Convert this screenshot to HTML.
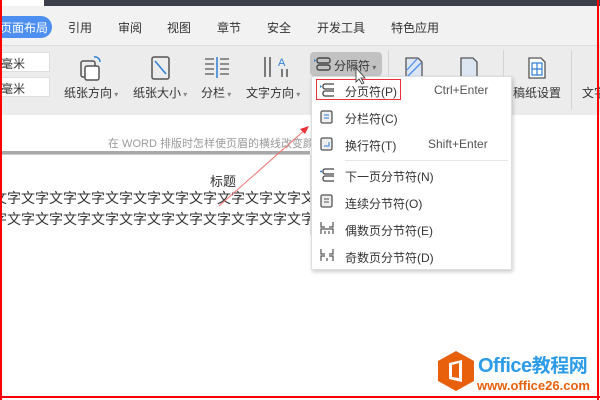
<!DOCTYPE html>
<html><head><meta charset="utf-8"><style>
*{margin:0;padding:0;box-sizing:border-box}
body{width:600px;height:400px;overflow:hidden;position:relative;background:#fff;font-family:"Liberation Sans","Noto Sans CJK SC",sans-serif;color:#333}
.a{position:absolute;white-space:nowrap}
.tab{font-size:12px;top:19px}
.lbl{font-size:12px;top:84px}
.mi{font-size:12px;left:345px}
.mic{position:absolute;left:320px;width:14px;height:14px}
</style></head><body>
<div class="a" style="left:44px;top:0;width:556px;height:6px;background:#3c3f4a"></div>
<div class="a" style="left:0;top:6px;width:600px;height:40px;background:#f2f2f2"></div>
<div class="a" style="left:0;top:16px;width:52px;height:22px;background:#4d8ff0;border-radius:0 11px 11px 0"></div>
<div class="a tab" style="left:0;color:#fff">页面布局</div>
<div class="a tab" style="left:68px">引用</div>
<div class="a tab" style="left:118px">审阅</div>
<div class="a tab" style="left:167px">视图</div>
<div class="a tab" style="left:217px">章节</div>
<div class="a tab" style="left:267px">安全</div>
<div class="a tab" style="left:317px">开发工具</div>
<div class="a tab" style="left:391px">特色应用</div>
<div class="a" style="left:0;top:45px;width:600px;height:70px;background:#ececec;border-top:1px solid #ddd"></div>
<div class="a" style="left:0;top:52px;width:50px;height:20px;background:#fff;border:1px solid #ddd;font-size:12px;padding:2px 0 0 0">毫米</div>
<div class="a" style="left:0;top:77px;width:50px;height:20px;background:#fff;border:1px solid #ddd;font-size:12px;padding:2px 0 0 0">毫米</div>
<svg class="a" style="left:78px;top:55px" width="26" height="26"><rect x="3" y="6" width="14" height="16" fill="none" stroke="#555" stroke-width="1.5" rx="2"/><rect x="7" y="11" width="14" height="14" fill="#fff" stroke="#555" stroke-width="1.5" rx="2"/><path d="M16 2 a5 5 0 0 1 6 5" fill="none" stroke="#2d7fd6" stroke-width="1.5"/></svg>
<svg class="a" style="left:150px;top:55px" width="22" height="26"><rect x="2" y="2" width="17" height="22" fill="none" stroke="#555" stroke-width="1.5" rx="2"/><path d="M5 6 L16 19" stroke="#2d7fd6" stroke-width="1.5"/></svg>
<svg class="a" style="left:204px;top:56px" width="26" height="22"><path d="M1 3h9M1 8h9M1 13h9M1 18h9M16 3h9M16 8h9M16 13h9M16 18h9" stroke="#555" stroke-width="1.3"/><path d="M13 1v21" stroke="#2d7fd6" stroke-width="1.5"/></svg>
<svg class="a" style="left:262px;top:55px" width="28" height="24"><path d="M3 2v20M8 2v20M20 14v8M25 14v8" stroke="#555" stroke-width="1.5"/><text x="16" y="11" font-size="11" fill="#2d7fd6" font-family="Liberation Sans">A</text></svg>
<div class="a lbl" style="left:64px">纸张方向<span style="font-size:8px;color:#888"> ▾</span></div>
<div class="a lbl" style="left:133px">纸张大小<span style="font-size:8px;color:#888"> ▾</span></div>
<div class="a lbl" style="left:201px">分栏<span style="font-size:8px;color:#888"> ▾</span></div>
<div class="a lbl" style="left:246px">文字方向<span style="font-size:8px;color:#888"> ▾</span></div>
<div class="a" style="left:310px;top:52px;width:72px;height:24px;background:#c2c2c2;border-radius:4px"></div>
<svg class="a" style="left:314px;top:57px" width="18" height="14"><rect x="3" y="1" width="13" height="5" rx="2" fill="none" stroke="#444" stroke-width="1.4"/><rect x="3" y="8" width="13" height="5" rx="2" fill="none" stroke="#444" stroke-width="1.4"/><path d="M0 2l2 1.5-2 1.5z" fill="#2d7fd6"/></svg>
<div class="a" style="left:334px;top:57px;font-size:12px">分隔符<span style="font-size:8px;color:#666"> ▾</span></div>
<div class="a" style="left:388px;top:50px;width:1px;height:60px;background:#d4d4d4"></div>
<div class="a" style="left:503px;top:50px;width:1px;height:60px;background:#d4d4d4"></div>
<div class="a" style="left:571px;top:50px;width:1px;height:60px;background:#d4d4d4"></div>
<svg class="a" style="left:404px;top:56px" width="20" height="24"><path d="M2 2h12l4 4v16H2z" fill="#dce6f2" stroke="#555" stroke-width="1.3"/><path d="M3 14L13 3M3 21L17 7" stroke="#4d8ff0" stroke-width="1.3"/></svg>
<svg class="a" style="left:459px;top:56px" width="20" height="24"><path d="M2 2h12l4 4v16H2z" fill="#dce6f2" stroke="#555" stroke-width="1.3"/></svg>
<svg class="a" style="left:527px;top:56px" width="20" height="24"><path d="M2 2h12l4 4v16H2z" fill="#fff" stroke="#555" stroke-width="1.3"/><path d="M5 7h10v12H5zM5 13h10M10 7v12" stroke="#2d7fd6" fill="none" stroke-width="1.2"/></svg>
<div class="a lbl" style="left:513px">稿纸设置</div>
<div class="a lbl" style="left:582px">文字</div>
<div class="a" style="left:108px;top:135px;font-size:11px;color:#999">在 WORD 排版时怎样使页眉的横线改变颜色</div>
<div class="a" style="left:0;top:151px;width:310px;height:4px;background:#a8a8a8;border-bottom:1px solid #ccc"></div>
<div class="a" style="left:310px;top:155px;width:2px;height:80px;background:#e4e4e4"></div>
<div class="a" style="left:210px;top:171px;font-size:13px;color:#333">标题</div>
<div class="a" style="left:0;top:186px;width:310px;height:45px;overflow:hidden">
<div class="a" style="left:-7px;top:2px;font-size:14px;color:#333">文字文字文字文字文字文字文字文字文字文字文字文字</div>
<div class="a" style="left:-21px;top:23px;font-size:14px;color:#333">文字文字文字文字文字文字文字文字文字文字文字文字</div>
</div>
<div class="a" style="left:311px;top:76px;width:201px;height:194px;background:#fff;border:1px solid #ddd;box-shadow:1px 2px 4px rgba(0,0,0,.2)"></div>
<div class="a" style="left:316px;top:79px;width:85px;height:21px;border:1.5px solid #e8333a"></div>
<svg class="mic" style="top:83px" width="16" height="14"><rect x="3" y="1" width="12" height="5" rx="2" fill="none" stroke="#444" stroke-width="1.3"/><rect x="3" y="8" width="12" height="5" rx="2" fill="none" stroke="#444" stroke-width="1.3"/><path d="M0 2l2 1.5-2 1.5z" fill="#2d7fd6"/></svg>
<div class="a mi" style="top:83px">分页符(P)</div><div class="a mi" style="left:434px;top:83px;color:#555">Ctrl+Enter</div>
<svg class="mic" style="top:110px"><rect x="1" y="1" width="11" height="12" rx="1.5" fill="#eee" stroke="#555" stroke-width="1.3"/><path d="M4 5h5M4 8h5" stroke="#2d7fd6"/></svg>
<div class="a mi" style="top:110px">分栏符(C)</div>
<svg class="mic" style="top:137px"><rect x="1" y="1" width="11" height="12" rx="1.5" fill="#eee" stroke="#555" stroke-width="1.3"/><path d="M9 5v4H4" stroke="#2d7fd6" fill="none"/></svg>
<div class="a mi" style="top:137px">换行符(T)</div><div class="a mi" style="left:428px;top:137px;color:#555">Shift+Enter</div>
<div class="a" style="left:345px;top:160px;width:163px;height:1px;background:#e6e6e6"></div>
<svg class="mic" style="top:168px" width="16" height="14"><rect x="3" y="1" width="12" height="5" rx="2" fill="none" stroke="#444" stroke-width="1.3"/><rect x="3" y="8" width="12" height="5" rx="2" fill="none" stroke="#444" stroke-width="1.3"/><circle cx="1" cy="3.5" r="1" fill="#2d7fd6"/></svg>
<div class="a mi" style="top:168px">下一页分节符(N)</div>
<svg class="mic" style="top:194px"><rect x="1" y="1" width="11" height="12" rx="1.5" fill="#eee" stroke="#555" stroke-width="1.3"/><path d="M4 5h5M4 8h5" stroke="#555"/></svg>
<div class="a mi" style="top:195px">连续分节符(O)</div>
<svg class="mic" style="top:221px"><path d="M1 1v5h4M13 1v5H9M1 13V8h12v5M5 10v3M9 10v3" stroke="#555" fill="none" stroke-width="1.2"/></svg>
<div class="a mi" style="top:222px">偶数页分节符(E)</div>
<svg class="mic" style="top:248px"><path d="M1 1v5h4M13 1v5H9M1 13V8h4M9 8h4v5M7 10v3" stroke="#555" fill="none" stroke-width="1.2"/></svg>
<div class="a mi" style="top:249px">奇数页分节符(D)</div>
<svg class="a" style="left:0;top:0" width="600" height="400"><path d="M219 206L306 129" stroke="#f07070" stroke-width="1"/><path d="M309 126l-9 3 5 5z" fill="#e8333a"/><path d="M356 68l0 14 3-3 3 5 2-1-3-5h4z" fill="#fff" stroke="#333" stroke-width=".8"/></svg>
<svg class="a" style="left:437px;top:350px" width="38" height="42"><path d="M19 1L37 11v20L19 41 1 31V11z" fill="#e8600c"/><path d="M12 13l13-3v22l-13-3zM15 15v12l7 1V13z" fill="#fff"/></svg>
<div class="a" style="left:478px;top:351px;font-size:20px;font-weight:bold;color:#2d9ce8;letter-spacing:-0.5px">Office<span style="font-family:'Noto Sans CJK SC',sans-serif;font-size:19px">教程网</span></div>
<div class="a" style="left:477px;top:378px;font-size:13px;font-weight:bold;color:#e8600c">www.office26.com</div>
<div class="a" style="left:0;top:0;width:2px;height:400px;background:#f00"></div>
<div class="a" style="left:597px;top:0;width:2px;height:400px;background:#f00"></div>
<div class="a" style="left:0;top:396px;width:600px;height:2px;background:#f00"></div>
</body></html>
